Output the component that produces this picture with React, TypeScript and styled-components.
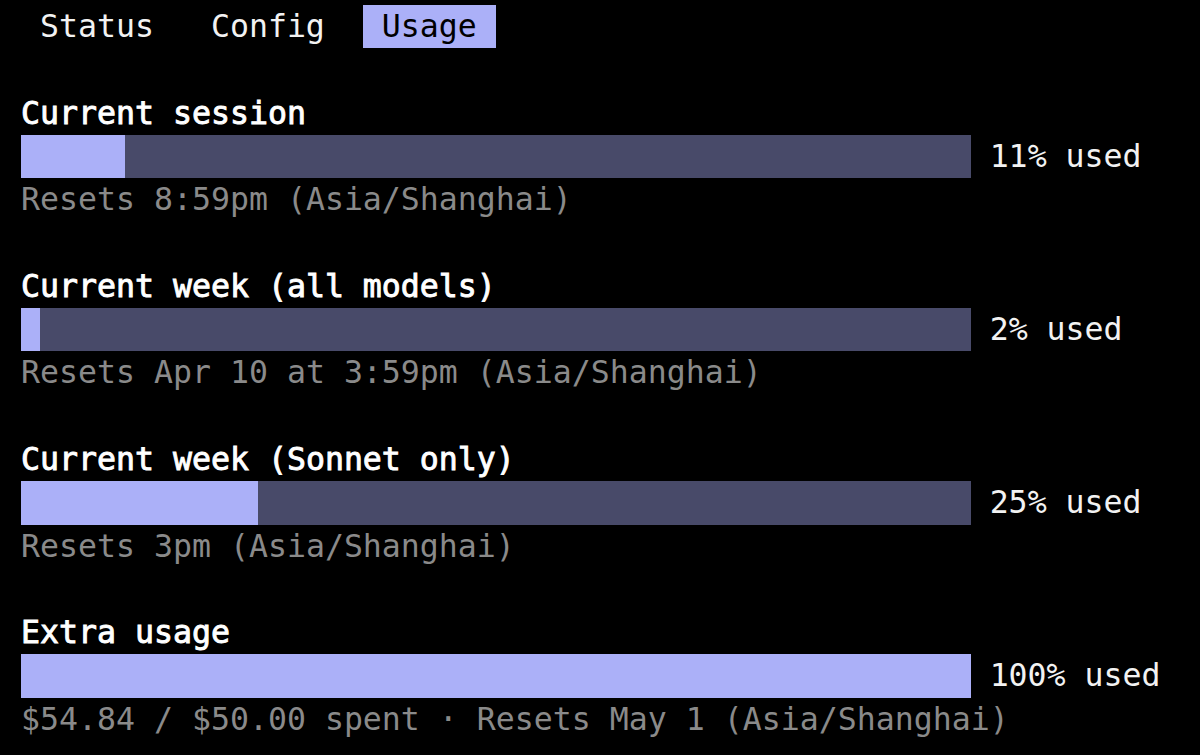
import React from "react";
import styled, { createGlobalStyle } from "styled-components";

const GlobalStyle = createGlobalStyle`
  html, body {
    margin: 0;
    padding: 0;
    background: #000000;
  }
`;

interface Section {
  title: string;
  percent: number;
  note: string;
}

const sections: Section[] = [
  { title: "Current session", percent: 11, note: "Resets 8:59pm (Asia/Shanghai)" },
  { title: "Current week (all models)", percent: 2, note: "Resets Apr 10 at 3:59pm (Asia/Shanghai)" },
  { title: "Current week (Sonnet only)", percent: 25, note: "Resets 3pm (Asia/Shanghai)" },
  { title: "Extra usage", percent: 100, note: "$54.84 / $50.00 spent · Resets May 1 (Asia/Shanghai)" },
];

const tabs = ["Status", "Config", "Usage"];

// bar is 50 cells wide, filled in half cells
const BAR_CELLS = 50;

const App = () => {
  return (
    <>
      <GlobalStyle />
      <Screen>
        <TabRow>
          {tabs.map((t) => (
            <Tab key={t} $active={t === "Usage"}>
              {t}
            </Tab>
          ))}
        </TabRow>
        <Blank />
        {sections.map((s, i) => {
          const half = Math.round((s.percent / 100) * BAR_CELLS * 2) / 2;
          return (
            <Block key={s.title}>
              <Title>{s.title}</Title>
              <BarRow>
                <Track>
                  <Fill style={{ width: `${half}ch` }} />
                </Track>
                <Percent>{s.percent}% used</Percent>
              </BarRow>
              <Note>{s.note}</Note>
              {i < sections.length - 1 && <Blank />}
            </Block>
          );
        })}
      </Screen>
    </>
  );
};

const Screen = styled.div`
  font-family: "DejaVu Sans Mono", "Liberation Mono", monospace;
  font-size: 31.55px;
  line-height: 43.3px;
  color: #f2f2f2;
  padding: 5px 0 0 21px;
  display: flex;
  flex-direction: column;
`;

const Line = styled.div`
  height: 43.3px;
  white-space: pre;
`;

const Blank = styled(Line)``;

const TabRow = styled(Line)`
  display: flex;
  gap: 1ch;
`;

const Tab = styled.span<{ $active?: boolean }>`
  padding: 0 1ch;
  background: ${(p) => (p.$active ? "#abb0f8" : "transparent")};
  color: ${(p) => (p.$active ? "#000000" : "#f2f2f2")};
`;

const Block = styled.div`
  display: flex;
  flex-direction: column;
`;

/* medium weight: regular face with a light stroke */
const Title = styled(Line)`
  color: #ffffff;
  -webkit-text-stroke: 0.9px #ffffff;
`;

const BarRow = styled(Line)`
  display: flex;
  align-items: stretch;
`;

const Track = styled.div`
  width: ${BAR_CELLS}ch;
  background: #484a69;
  display: flex;
`;

const Fill = styled.div`
  background: #abb0f8;
  height: 100%;
`;

const Percent = styled.span`
  margin-left: 1ch;
  color: #f2f2f2;
`;

const Note = styled(Line)`
  color: #8a8a8a;
`;

export default App;
